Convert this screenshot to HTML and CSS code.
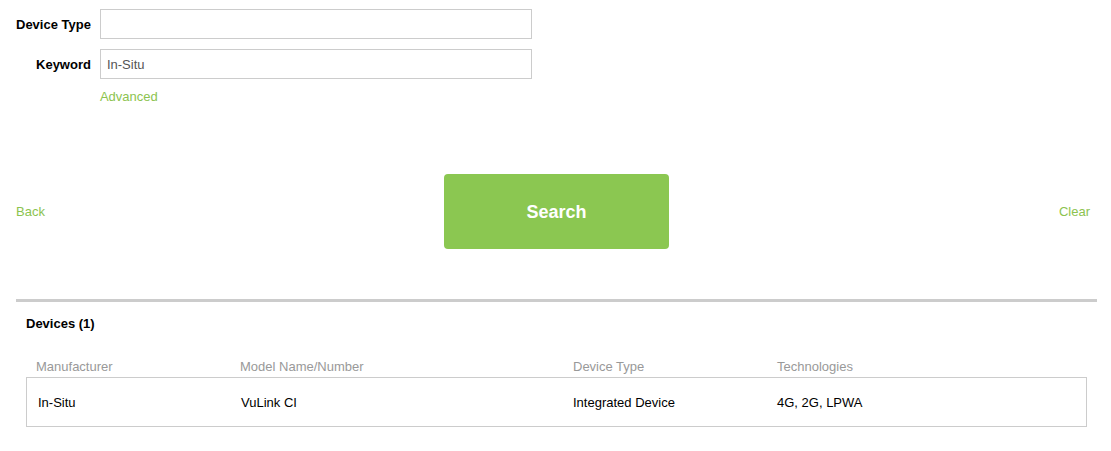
FILE: index.html
```html
<!DOCTYPE html>
<html lang="en">
<head>
  <meta charset="UTF-8">
  <title>Device Search</title>
  <link rel="stylesheet" href="styles.css">
</head>
<body>

<div class="page">
  <form class="search-form" onsubmit="return false">
    <label for="deviceType">Device Type</label>
    <input type="text" id="deviceType">

    <label for="keyword">Keyword</label>
    <input type="text" id="keyword" value="In-Situ">

    <span></span>
    <a href="#" class="link">Advanced</a>
  </form>

  <div class="actions">
    <a href="#" class="link">Back</a>
    <button class="search-btn">Search</button>
    <a href="#" class="link clear">Clear</a>
  </div>

  <div class="results">
    <h3>Devices (1)</h3>

    <div class="table-head">
      <div>Manufacturer</div>
      <div>Model Name/Number</div>
      <div>Device Type</div>
      <div>Technologies</div>
    </div>

    <div class="table-row">
      <div>In-Situ</div>
      <div>VuLink CI</div>
      <div>Integrated Device</div>
      <div>4G, 2G, LPWA</div>
    </div>
  </div>
</div>

</body>
</html>
```

FILE: styles.css
```css
body {
  margin: 0;
  font-family: 'Liberation Sans', Arial, sans-serif;
  font-size: 13px;
  color: #000;
  background: #fff;
}

.page {
  padding: 9px 14px 0 16px;
}

.search-form {
  display: grid;
  grid-template-columns: auto 432px;
  justify-content: start;
  column-gap: 9px;
  row-gap: 10px;
  align-items: center;
}

.search-form label {
  font-weight: bold;
  text-align: right;
  white-space: nowrap;
}

.search-form input {
  box-sizing: border-box;
  height: 30px;
  border: 1px solid #ccc;
  padding: 0 6px;
  font-family: inherit;
  font-size: 13px;
  color: #555;
  outline: none;
}

.link {
  color: #8cc34f;
  text-decoration: none;
}

.actions {
  display: flex;
  justify-content: space-between;
  align-items: center;
  margin-top: 70px;
}

.actions .link {
  box-sizing: border-box;
  width: 80px;
}

.actions .clear {
  text-align: right;
  padding-right: 7px;
}

.search-btn {
  width: 225px;
  height: 75px;
  border: none;
  border-radius: 4px;
  background: #8bc751;
  color: #fff;
  font-family: inherit;
  font-size: 18px;
  font-weight: bold;
  padding-top: 2px;
  cursor: pointer;
}

.results {
  margin-top: 50px;
  border-top: 3px solid #ccc;
  padding: 0 10px;
}

.results h3 {
  margin: 14px 0 0 0;
  font-size: 13px;
}

.table-head,
.table-row {
  display: grid;
}

.table-head {
  grid-template-columns: 204px 333px 204px 1fr;
  margin-top: 28px;
  padding: 0 0 3px 10px;
  color: #999;
}

.table-row {
  grid-template-columns: 203px 332px 204px 1fr;
  border: 1px solid #ccc;
  padding: 17px 0 16px 11px;
}
```
